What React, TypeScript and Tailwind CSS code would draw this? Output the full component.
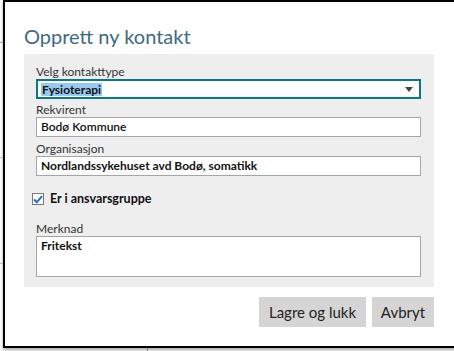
import React from "react";

const font = { fontFamily: 'Lato, "Open Sans", sans-serif' };

export default function App() {
  return (
    <div
      className="relative w-[454px] h-[351px] overflow-hidden bg-white"
      style={font}
    >
      {/* background marks behind dialog */}
      <div className="absolute left-0 top-[42px] w-[3px] h-px bg-[#b0b0b0]" />
      <div className="absolute left-0 top-[157px] w-[3px] h-px bg-[#c8c8c8]" />
      <div className="absolute left-0 top-[263px] w-[3px] h-px bg-[#c8c8c8]" />
      <div className="absolute left-[147px] top-[340px] w-px h-[11px] bg-[#a0a0a0]" />

      <div className="relative ml-[3px] w-[480px] h-[348px] bg-white border-l-2 border-t-2 border-b-2 border-black shadow-[0_2px_3px_rgba(0,0,0,0.35)] pl-[19px]">
        <div className="h-[52px] flex items-end pb-[4px]">
          <div className="text-[20px] leading-[27px] text-[#3e6a80]">Opprett ny kontakt</div>
        </div>

        <div className="w-[410px] bg-[#eeeeee] pl-[12px] pr-[13px] pt-[10px] pb-[10px] text-[12px] text-[#333]">
          <div className="leading-[15px]">Velg kontakttype</div>
          <div className="relative h-[20px] border-2 border-[#07797f] bg-white flex items-center pl-[3px]">
            <span className="bg-[#99c9ef] font-bold text-[12px] leading-[13px] px-px text-[#111]">Fysioterapi</span>
            <svg className="absolute right-[6px] top-[6px]" width="8" height="5" viewBox="0 0 8 5">
              <path d="M0 0 L8 0 L4 5 Z" fill="#444" />
            </svg>
          </div>

          <div className="leading-[15px] mt-[3px]">Rekvirent</div>
          <div className="h-[20px] border border-[#a6a6a6] bg-white flex items-center pl-[4px] font-semibold text-[#111]">
            Bodø Kommune
          </div>

          <div className="leading-[15px] mt-[4px]">Organisasjon</div>
          <div className="h-[20px] border border-[#a6a6a6] bg-white flex items-center pl-[4px] font-bold text-[#111]">
            Nordlandssykehuset avd Bodø, somatikk
          </div>

          <div className="flex items-center mt-[15px] ml-[-4px] h-[16px]">
            <div className="w-[12px] h-[12px] border border-[#7a7a7a] bg-white flex items-center justify-center">
              <svg width="10" height="9" viewBox="0 0 10 9">
                <path d="M1 4.5 L3.8 7.3 L9 1.2" stroke="#1c6fc4" strokeWidth="2" fill="none" />
              </svg>
            </div>
            <span className="ml-[6px] font-bold text-[12.5px] text-[#111]">Er i ansvarsgruppe</span>
          </div>

          <div className="leading-[15px] mt-[14px]">Merknad</div>
          <div className="h-[41px] border border-[#a6a6a6] bg-white pl-[4px] pt-[1px] font-bold text-[#111] leading-[15px]">
            Fritekst
          </div>
        </div>

        <div className="w-[410px] flex justify-end gap-[6px] mt-[10px]">
          <button className="w-[107px] h-[30px] bg-[#d5d5d5] text-[15px] text-[#222]">Lagre og lukk</button>
          <button className="w-[62px] h-[30px] bg-[#d5d5d5] text-[15px] text-[#222]">Avbryt</button>
        </div>
      </div>
    </div>
  );
}
